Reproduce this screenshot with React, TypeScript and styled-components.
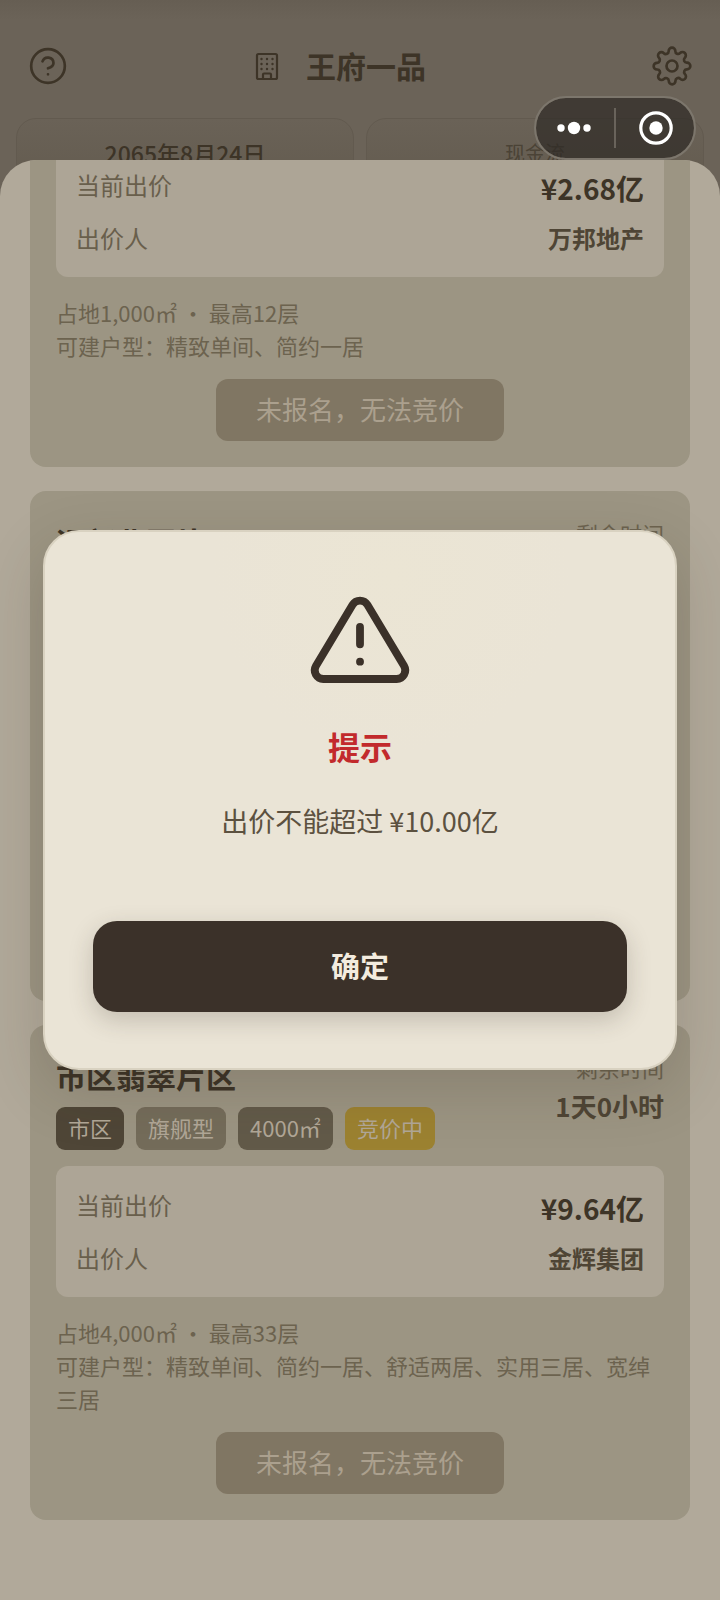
import React from "react";
import styled, { createGlobalStyle } from "styled-components";

const GlobalStyle = createGlobalStyle`
  * { box-sizing: border-box; }
  body {
    margin: 0;
    background: #6b6358;
    font-family: "Noto Sans CJK SC", "Noto Sans", sans-serif;
    color: #3d3427;
  }
  h1, h2, p, dl, dd, dt, ul { margin: 0; padding: 0; }
  button { font-family: inherit; border: 0; padding: 0; }
`;

const Screen = styled.div`
  position: relative;
  height: 100vh;
  min-height: 900px;
  overflow: hidden;
  background: linear-gradient(#665e53 0, #6b6358 20px, #6b6358 100%);
`;

const TopBar = styled.header`
  display: flex;
  align-items: center;
  justify-content: space-between;
  padding: 44px 28px 30px;
`;

const IconButton = styled.button`
  display: flex;
  background: none;
  color: #3d3427;
`;

const Brand = styled.div`
  display: flex;
  align-items: center;
  gap: 23px;
  margin-right: 43px;
`;

const BrandName = styled.h1`
  padding-bottom: 2px;
  font-size: 30px;
  line-height: 42px;
  font-weight: 700;
`;

const Stats = styled.div`
  display: grid;
  grid-template-columns: 1fr 1fr;
  gap: 12px;
  padding: 0 16px;
`;

const Stat = styled.div<{ $strong?: boolean }>`
  min-height: 120px;
  padding: 17px 16px;
  border: 1px solid #625a4f;
  border-radius: 20px;
  background: linear-gradient(#6a6257, #645c50 60px);
  text-align: center;
  line-height: 34px;
  font-size: ${(p) => (p.$strong ? 23 : 20)}px;
  font-weight: ${(p) => (p.$strong ? 500 : 400)};
  color: ${(p) => (p.$strong ? "#3d3427" : "#4b4336")};
`;

const Sheet = styled.main`
  position: absolute;
  inset: 160px 0 0;
  display: flex;
  flex-direction: column;
  justify-content: flex-end;
  gap: 24px;
  padding: 0 30px 80px;
  overflow: hidden;
  border-radius: 36px 36px 0 0;
  background: #b1a99a;
`;

const Card = styled.article<{ $tall?: boolean }>`
  flex: none;
  min-height: ${(p) => (p.$tall ? "510px" : "0")};
  padding: 26px;
  border-radius: 16px;
  background: #9c9583;
`;

const CardHead = styled.div`
  display: flex;
  justify-content: space-between;
  margin-bottom: 16px;
`;

const PlotName = styled.h2`
  font-size: 30px;
  line-height: 48px;
  font-weight: 700;
`;

const Tags = styled.ul`
  display: flex;
  gap: 12px;
  margin-top: 8px;
  list-style: none;
`;

const tones = {
  area: "#4f4637",
  type: "#746c5a",
  size: "#625a49",
  live: "#9c8231",
};

const Tag = styled.li<{ $tone: keyof typeof tones }>`
  padding: 0 12px 2px;
  border-radius: 9px;
  background: ${(p) => tones[p.$tone]};
  color: #b1a797;
  font-size: 22px;
  line-height: 41px;
`;

const Remaining = styled.div`
  text-align: right;
  font-size: 22px;
  line-height: 33px;
  color: #6c634f;
`;

const TimeLeft = styled.p`
  font-size: 26px;
  line-height: 44px;
  font-weight: 700;
  color: #4f4535;
`;

const BidPanel = styled.dl`
  display: flex;
  flex-direction: column;
  gap: 11px;
  padding: 21px 20px;
  border-radius: 12px;
  background: #ada596;
`;

const BidRow = styled.div`
  display: flex;
  justify-content: space-between;
  font-size: 24px;
  line-height: 36px;
`;

const BidLabel = styled.dt`
  color: #695f4c;
`;

const Price = styled.dd`
  font-size: 28px;
  line-height: 42px;
  font-weight: 700;
`;

const Bidder = styled.dd`
  font-weight: 700;
  color: #4f4535;
`;

const Details = styled.div`
  padding: 19px 0 17px;
  font-size: 22px;
  line-height: 33px;
  color: #6c634f;
`;

const BidButton = styled.button`
  display: block;
  margin: 0 auto;
  padding: 0 40px 3px;
  border-radius: 12px;
  background: #807663;
  color: #aba08e;
  font-size: 26px;
  line-height: 59px;
`;

const Capsule = styled.div`
  position: absolute;
  top: 96px;
  right: 24px;
  display: flex;
  align-items: center;
  width: 162px;
  height: 64px;
  border: 2px solid #7c766c;
  border-radius: 32px;
  background: rgba(46, 42, 37, 0.7);
  background-clip: padding-box;
`;

const CapsuleButton = styled.button`
  flex: 1;
  display: flex;
  justify-content: center;
  background: none;
  color: #fff;

  & + & {
    border-left: 2px solid #69635b;
  }
`;

const Overlay = styled.div`
  position: absolute;
  inset: 0;
  display: flex;
  align-items: center;
  justify-content: center;
`;

const Dialog = styled.div`
  display: flex;
  flex-direction: column;
  align-items: center;
  width: 88%;
  padding: 56px 48px;
  border: 2px solid #d9d2c1;
  border-radius: 36px;
  background:
    radial-gradient(circle at 55% 8%, #ebe5d4, transparent 30%),
    #eae4d6;
  box-shadow: 0 20px 60px rgba(50, 40, 25, 0.18);
`;

const DialogTitle = styled.h2`
  margin-top: 30px;
  font-size: 32px;
  line-height: 48px;
  font-weight: 700;
  color: #c22a2c;
`;

const DialogText = styled.p`
  margin: 30px 0 79px;
  font-size: 27px;
  line-height: 42px;
  color: #5c5140;
`;

const ConfirmButton = styled.button`
  width: 100%;
  padding-bottom: 3px;
  border-radius: 24px;
  background: #3b3129;
  box-shadow: 0 8px 24px rgba(59, 49, 41, 0.22);
  color: #f3ecdf;
  font-size: 29px;
  line-height: 88px;
  font-weight: 700;
`;

const lineIcon = {
  fill: "none",
  stroke: "currentColor",
  strokeLinecap: "round",
  strokeLinejoin: "round",
} as const;

const HelpIcon = () => (
  <svg width="40" height="40" viewBox="0 0 24 24" strokeWidth="1.600" {...lineIcon}>
    <circle cx="12" cy="12" r="10.100" />
    <path d="M8.700 9.200a3.400 3.400 0 0 1 6.600 1c0 2.200-3.300 3.200-3.300 3.200M12 17h.01" />
  </svg>
);

const BuildingIcon = () => (
  <svg width="32" height="32" viewBox="0 0 32 32" strokeWidth="2.200" {...lineIcon}>
    <rect x="6" y="4" width="20" height="25" rx="1.500" />
    <path d="M12 29v-4.500q0-1 1-1h6q1 0 1 1V29" />
    <g fill="currentColor" stroke="none">
      {[9, 14, 19].map((y) =>
        [10.5, 16, 21.5].map((x) => <circle key={`${x}-${y}`} cx={x} cy={y} r="1.200" />)
      )}
    </g>
  </svg>
);

const GearIcon = () => (
  <svg width="40" height="40" viewBox="0 0 24 24" strokeWidth="1.600" {...lineIcon}>
    <circle cx="12" cy="12" r="3.300" />
    <path d="M19.4 15a1.65 1.65 0 0 0 .33 1.82l.06.06a2 2 0 0 1 0 2.83 2 2 0 0 1-2.83 0l-.06-.06a1.65 1.65 0 0 0-1.82-.33 1.65 1.65 0 0 0-1 1.51V21a2 2 0 0 1-2 2 2 2 0 0 1-2-2v-.09A1.65 1.65 0 0 0 9 19.4a1.65 1.65 0 0 0-1.82.33l-.06.06a2 2 0 0 1-2.83 0 2 2 0 0 1 0-2.83l.06-.06a1.65 1.65 0 0 0 .33-1.82 1.65 1.65 0 0 0-1.51-1H3a2 2 0 0 1-2-2 2 2 0 0 1 2-2h.09A1.65 1.65 0 0 0 4.6 9a1.65 1.65 0 0 0-.33-1.82l-.06-.06a2 2 0 0 1 0-2.83 2 2 0 0 1 2.83 0l.06.06a1.65 1.65 0 0 0 1.82.33H9a1.65 1.65 0 0 0 1-1.51V3a2 2 0 0 1 2-2 2 2 0 0 1 2 2v.09a1.65 1.65 0 0 0 1 1.51 1.65 1.65 0 0 0 1.82-.33l.06-.06a2 2 0 0 1 2.83 0 2 2 0 0 1 0 2.83l-.06.06a1.65 1.65 0 0 0-.33 1.82V9a1.65 1.65 0 0 0 1.51 1H21a2 2 0 0 1 2 2 2 2 0 0 1-2 2h-.09a1.65 1.65 0 0 0-1.51 1z" />
  </svg>
);

const WarningIcon = () => (
  <svg width="104" height="104" viewBox="0 0 24 24" strokeWidth="1.800" color="#3b3129" {...lineIcon}>
    <path d="M10.29 3.86L1.82 18a2 2 0 0 0 1.71 3h16.94a2 2 0 0 0 1.71-3L13.71 3.86a2 2 0 0 0-3.42 0zM12 9v4M12 17h.01" />
  </svg>
);

interface Plot {
  name?: string;
  tags?: { text: string; tone: keyof typeof tones }[];
  remaining?: string;
  price?: string;
  bidder?: string;
  details?: string[];
}

const plots: Plot[] = [
  {
    price: "¥2.68亿",
    bidder: "万邦地产",
    details: ["占地1,000㎡ • 最高12层", "可建户型：精致单间、简约一居"],
  },
  { name: "远郊北国片区" },
  {
    name: "市区翡翠片区",
    tags: [
      { text: "市区", tone: "area" },
      { text: "旗舰型", tone: "type" },
      { text: "4000㎡", tone: "size" },
      { text: "竞价中", tone: "live" },
    ],
    remaining: "1天0小时",
    price: "¥9.64亿",
    bidder: "金辉集团",
    details: [
      "占地4,000㎡ • 最高33层",
      "可建户型：精致单间、简约一居、舒适两居、实用三居、宽绰三居",
    ],
  },
];

const PlotCard = ({ plot }: { plot: Plot }) => (
  <Card $tall={!plot.price}>
    {plot.name && (
      <CardHead>
        <div>
          <PlotName>{plot.name}</PlotName>
          {plot.tags && (
            <Tags>
              {plot.tags.map((t) => (
                <Tag key={t.text} $tone={t.tone}>{t.text}</Tag>
              ))}
            </Tags>
          )}
        </div>
        <Remaining>
          <p>剩余时间</p>
          {plot.remaining && <TimeLeft>{plot.remaining}</TimeLeft>}
        </Remaining>
      </CardHead>
    )}
    {plot.price && (
      <>
        <BidPanel>
          <BidRow>
            <BidLabel>当前出价</BidLabel>
            <Price>{plot.price}</Price>
          </BidRow>
          <BidRow>
            <BidLabel>出价人</BidLabel>
            <Bidder>{plot.bidder}</Bidder>
          </BidRow>
        </BidPanel>
        <Details>
          {plot.details?.map((d) => <p key={d}>{d}</p>)}
        </Details>
        <BidButton disabled>未报名，无法竞价</BidButton>
      </>
    )}
  </Card>
);

export default function App() {
  return (
    <>
      <GlobalStyle />
      <Screen>
        <TopBar>
          <IconButton aria-label="帮助"><HelpIcon /></IconButton>
          <Brand>
            <BuildingIcon />
            <BrandName>王府一品</BrandName>
          </Brand>
          <IconButton aria-label="设置"><GearIcon /></IconButton>
        </TopBar>
        <Stats>
          <Stat $strong>2065年8月24日</Stat>
          <Stat>现金流</Stat>
        </Stats>
        <Sheet>
          {plots.map((p) => <PlotCard key={p.name ?? p.bidder} plot={p} />)}
        </Sheet>
        <Capsule>
          <CapsuleButton aria-label="更多">
            <svg width="36" height="40" viewBox="0 0 36 40" fill="currentColor">
              <circle cx="4" cy="20" r="3.700" />
              <circle cx="17" cy="20" r="6.200" />
              <circle cx="30" cy="20" r="3.700" />
            </svg>
          </CapsuleButton>
          <CapsuleButton aria-label="关闭">
            <svg width="36" height="40" viewBox="0 0 36 40">
              <circle cx="19" cy="20" r="15.200" fill="none" stroke="currentColor" strokeWidth="3.200" />
              <circle cx="19" cy="20" r="6.700" fill="currentColor" />
            </svg>
          </CapsuleButton>
        </Capsule>
        <Overlay>
          <Dialog role="alertdialog" aria-modal="true" aria-labelledby="dialog-title">
            <WarningIcon />
            <DialogTitle id="dialog-title">提示</DialogTitle>
            <DialogText>出价不能超过 ¥10.00亿</DialogText>
            <ConfirmButton>确定</ConfirmButton>
          </Dialog>
        </Overlay>
      </Screen>
    </>
  );
}
